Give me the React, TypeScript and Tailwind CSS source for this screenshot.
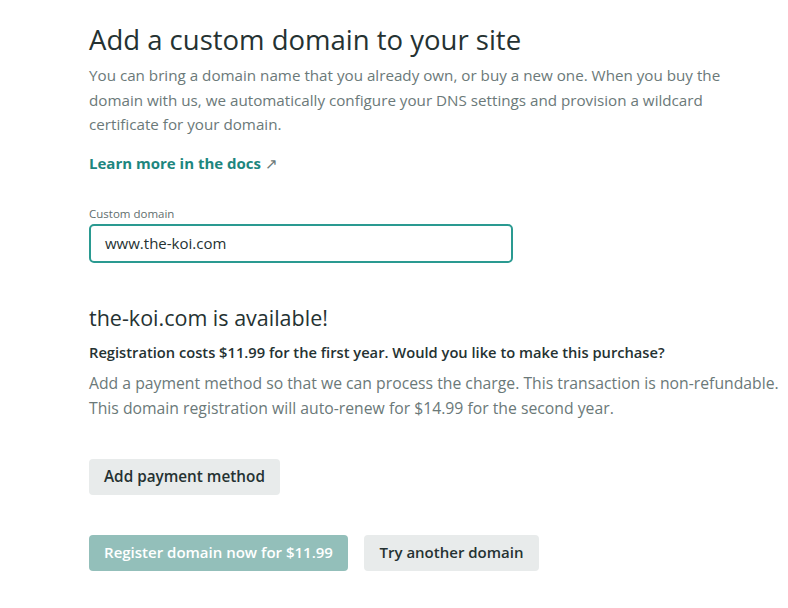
import React from "react";

export default function App() {
  return (
    <div
      className="min-h-[608px] w-[788px] bg-white pl-[89px] pr-[8px] text-[#2d3b3b]"
      style={{ fontFamily: '"Open Sans", "Noto Sans", sans-serif' }}
    >
      <h1 className="pt-[22px] text-[27.5px] leading-[36px] font-normal text-[#253232]">
        Add a custom domain to your site
      </h1>
      <p className="mt-[5px] w-[650px] text-[15.2px] leading-[24.5px] text-[#6b7979]">
        You can bring a domain name that you already own, or buy a new one. When you buy the
        domain with us, we automatically configure your DNS settings and provision a wildcard
        certificate for your domain.
      </p>
      <a className="mt-[12px] inline-block text-[15px] leading-[28px] font-bold text-[#1d867e]">
        Learn more in the docs <span className="font-normal text-[#6b7979]">↗</span>
      </a>
      <div className="mt-[29px]">
        <label className="block text-[11.5px] leading-[16px] text-[#5f6e6e]">Custom domain</label>
        <div className="mt-[2px] flex h-[39px] w-[424px] items-center rounded-[5px] border-2 border-[#2a9a91] px-[14px] text-[15px] text-[#253232]">
          www.the-koi.com
        </div>
      </div>
      <h2 className="mt-[40px] text-[21.5px] leading-[30px] font-normal text-[#253232]">
        the-koi.com is available!
      </h2>
      <p className="mt-[8px] text-[14.7px] leading-[22px] font-semibold text-[#253232]">
        Registration costs $11.99 for the first year. Would you like to make this purchase?
      </p>
      <p className="mt-[8px] whitespace-nowrap text-[15.75px] leading-[25px] text-[#6b7979]">
        Add a payment method so that we can process the charge. This transaction is non-refundable.
        <br />
        This domain registration will auto-renew for $14.99 for the second year.
      </p>
      <button className="mt-[38px] h-[36px] rounded-[4px] bg-[#e8ebeb] px-[15px] text-[15.3px] font-semibold text-[#253232]">
        Add payment method
      </button>
      <div className="mt-[40px] flex gap-[16px]">
        <button className="h-[36px] w-[259px] rounded-[4px] bg-[#93bfba] text-[15px] font-semibold text-white">
          Register domain now for $11.99
        </button>
        <button className="h-[36px] w-[175px] rounded-[4px] bg-[#e8ebeb] text-[15px] font-semibold text-[#253232]">
          Try another domain
        </button>
      </div>
    </div>
  );
}
